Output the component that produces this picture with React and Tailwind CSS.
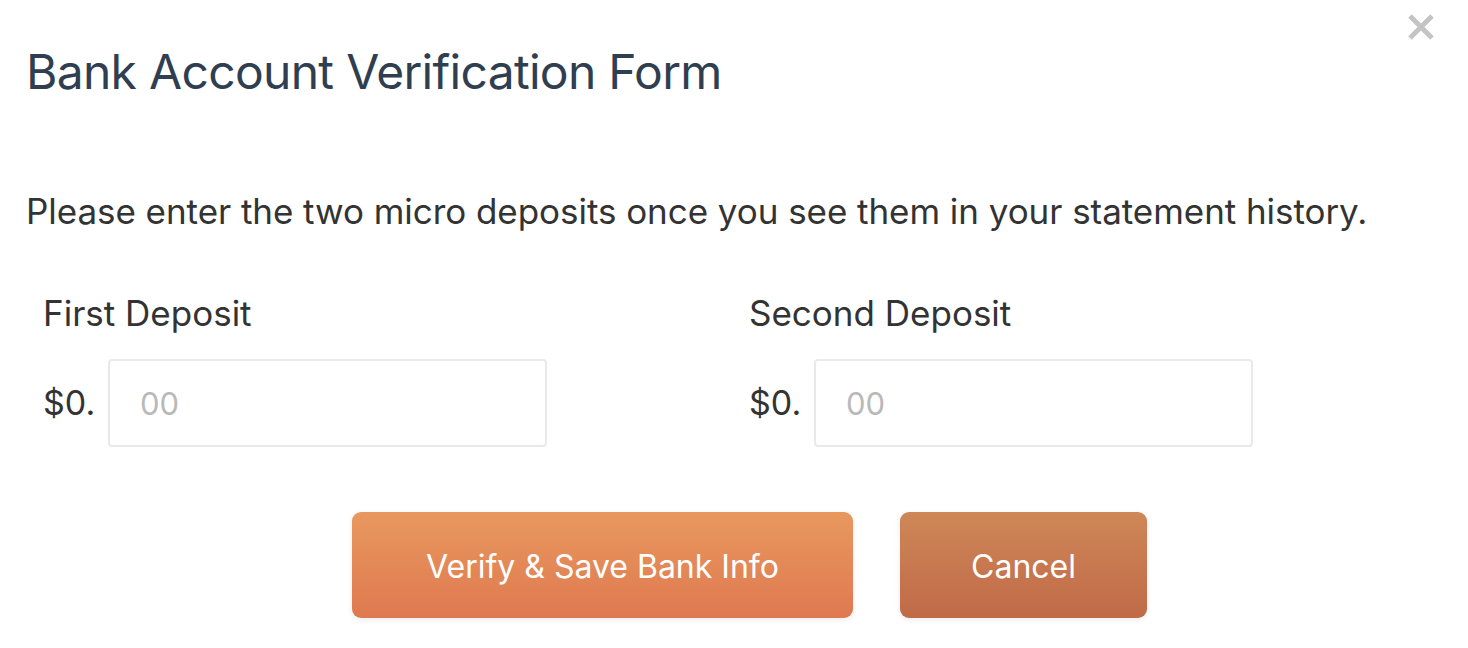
import React from "react";

function Field({ label }) {
  return (
    <div className="flex flex-col">
      <div className="text-[35px] leading-[42px] text-[#333333]">{label}</div>
      <div className="mt-[25px] flex items-center">
        <span className="w-[65px] text-[34px] leading-[40px] text-[#333333]">$0.</span>
        <input
          className="h-[88px] w-[439px] rounded-[4px] border-2 border-[#e9e9e9] bg-white px-[30px] text-[31px] text-[#333] outline-none placeholder:text-[#b9b9b9]"
          placeholder="00"
        />
      </div>
    </div>
  );
}

export default function App() {
  return (
    <div
      className="relative h-[648px] w-[1468px] overflow-hidden bg-white"
      style={{ fontFamily: "Inter, 'Noto Sans', sans-serif" }}
    >
      <button className="absolute right-[33px] top-[13px] flex h-[28px] w-[28px] items-center justify-center">
        <svg viewBox="0 0 28 28" className="h-[28px] w-[28px]">
          <path d="M3 3 L25 25 M25 3 L3 25" stroke="#c4c4c4" strokeWidth="5" strokeLinecap="butt" />
        </svg>
      </button>
      <div className="flex flex-col pl-[26px]">
        <h1 className="mt-[44px] text-[48px] font-normal leading-[56px] tracking-[-0.7px] text-[#2f3e50]">
          Bank Account Verification Form
        </h1>
        <p className="mt-[90px] text-[35px] leading-[42px] tracking-[-0.05px] text-[#333333]">
          Please enter the two micro deposits once you see them in your statement history.
        </p>
        <div className="mt-[60px] grid grid-cols-[706px_1fr] pl-[17px]">
          <Field label="First Deposit" />
          <Field label="Second Deposit" />
        </div>
        <div className="mt-[65px] flex gap-[47px] pl-[326px]">
          <button className="h-[106px] w-[501px] rounded-[9px] bg-gradient-to-b from-[#e8985f] to-[#df7950] pt-[3px] text-[32px] text-white shadow-[0_2px_6px_rgba(0,0,0,0.08)]">
            Verify &amp; Save Bank Info
          </button>
          <button className="h-[106px] w-[247px] rounded-[9px] bg-gradient-to-b from-[#ce8757] to-[#c06a48] pt-[3px] text-[32px] text-white shadow-[0_2px_6px_rgba(0,0,0,0.08)]">
            Cancel
          </button>
        </div>
      </div>
    </div>
  );
}
